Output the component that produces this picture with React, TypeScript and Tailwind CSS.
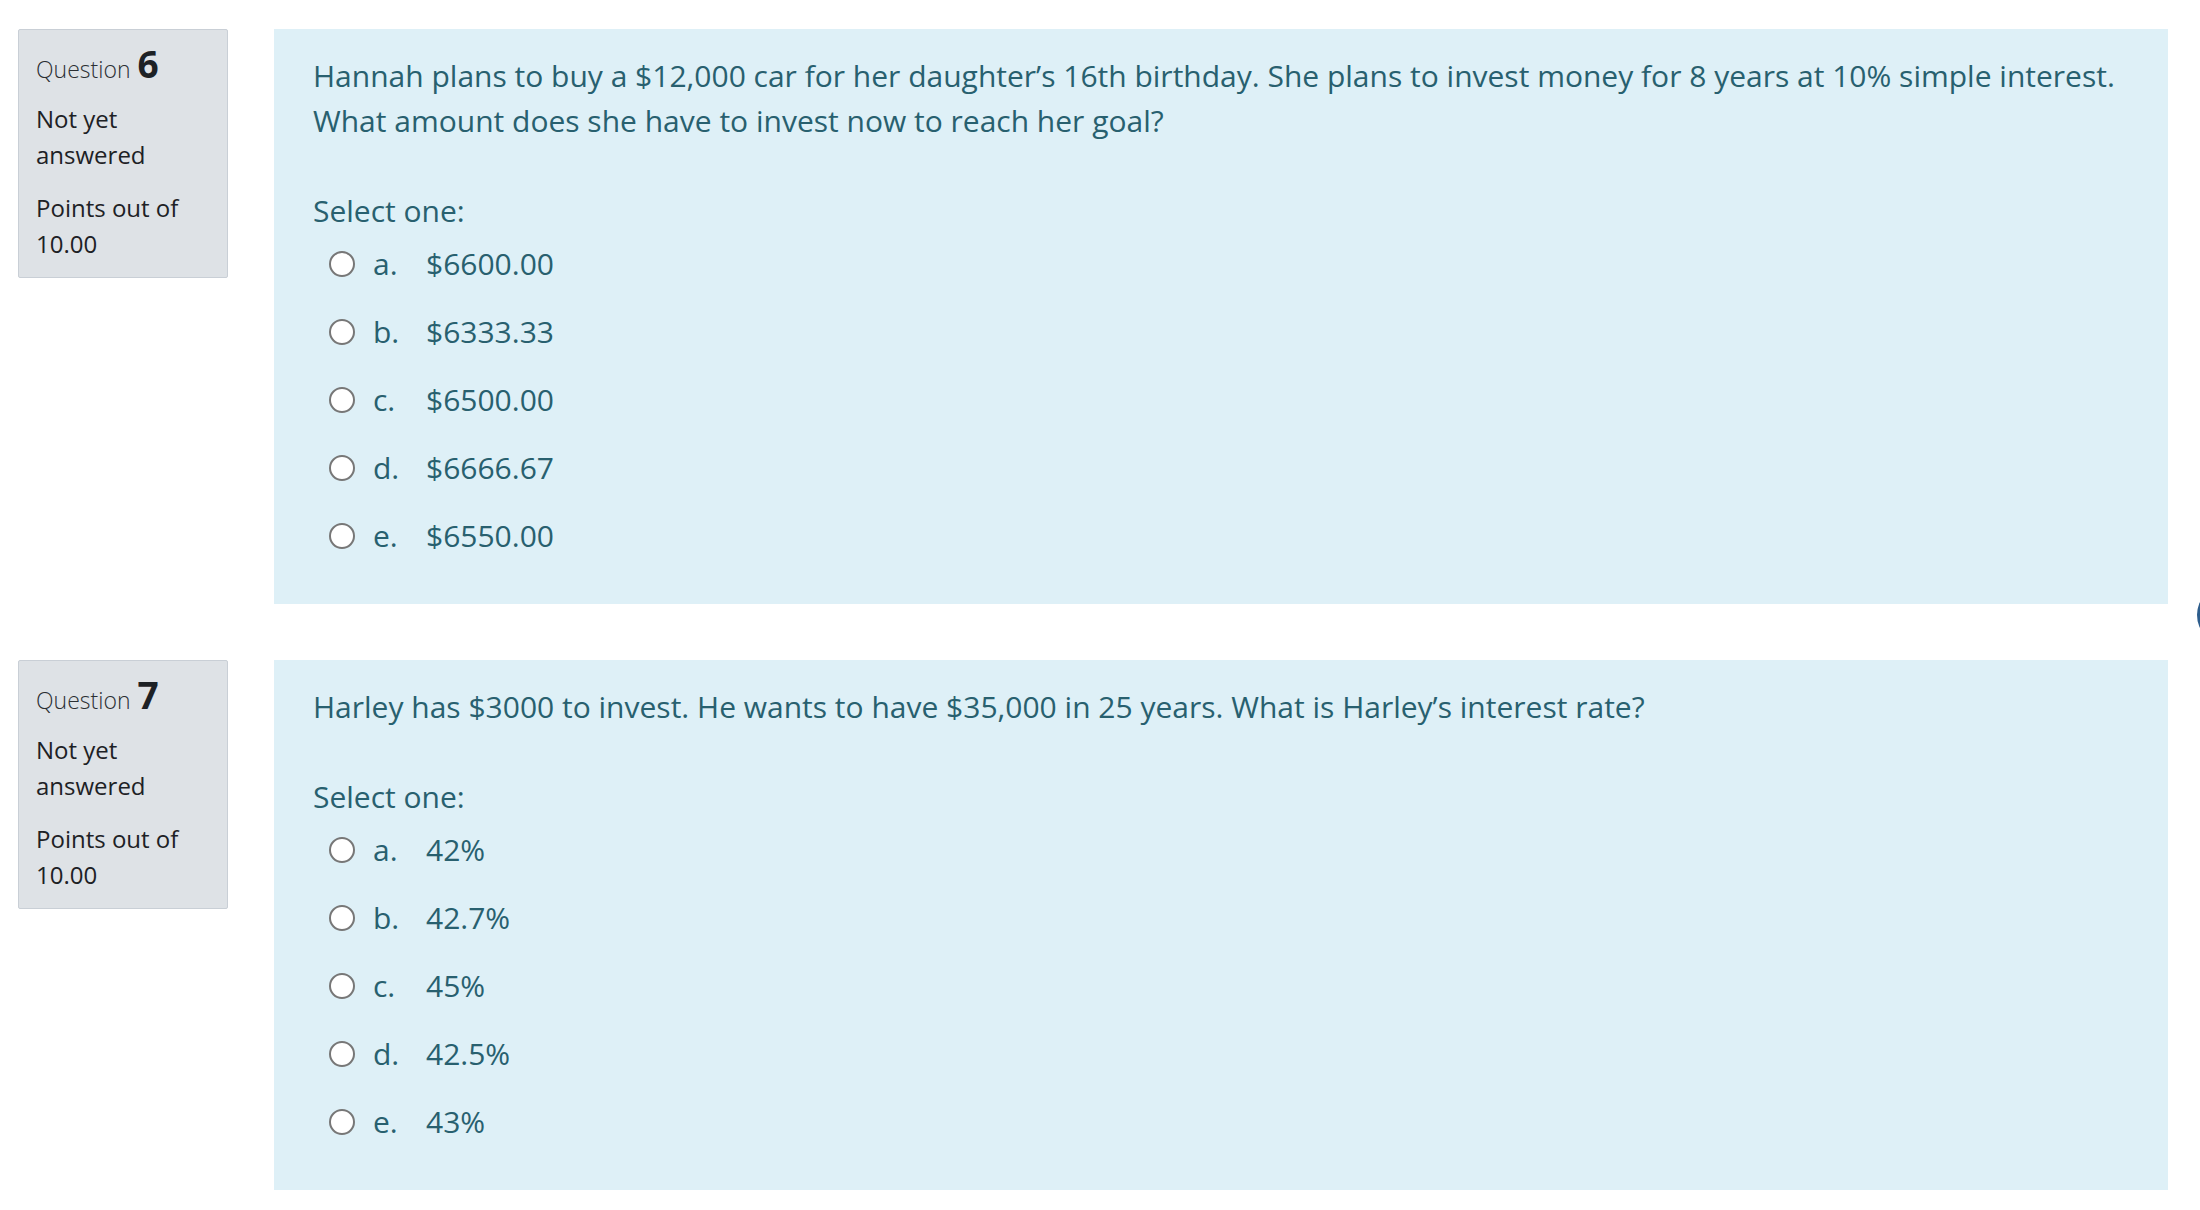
import React from "react";

type Question = {
  number: number;
  lines: string[];
  options: { letter: string; value: string }[];
};

const questions: Question[] = [
  {
    number: 6,
    lines: [
      "Hannah plans to buy a $12,000 car for her daughter\u2019s 16th birthday. She plans to invest money for 8 years at 10% simple interest.",
      "What amount does she have to invest now to reach her goal?",
    ],
    options: [
      { letter: "a.", value: "$6600.00" },
      { letter: "b.", value: "$6333.33" },
      { letter: "c.", value: "$6500.00" },
      { letter: "d.", value: "$6666.67" },
      { letter: "e.", value: "$6550.00" },
    ],
  },
  {
    number: 7,
    lines: [
      "Harley has $3000 to invest. He wants to have $35,000 in 25 years. What is Harley\u2019s interest rate?",
    ],
    options: [
      { letter: "a.", value: "42%" },
      { letter: "b.", value: "42.7%" },
      { letter: "c.", value: "45%" },
      { letter: "d.", value: "42.5%" },
      { letter: "e.", value: "43%" },
    ],
  },
];

const InfoBox = ({ number }: { number: number }) => (
  <div className="w-[210px] shrink-0 self-start bg-[#dee2e6] border border-[#c9cfd6] rounded-[2px] pl-[17px] pr-[10px] pt-[15px] pb-[15px] text-[#1d2125]">
    {/* question number */}
    <div className="flex items-baseline mb-[19px]">
      <span className="text-[23px] leading-none font-light text-[#2b2f33]">Question</span>
      <span className="text-[37px] leading-none font-bold ml-[7px]">{number}</span>
    </div>
    <div className="text-[24px] leading-[36px]">Not yet answered</div>
    <div className="text-[24px] leading-[36px] mt-[17px]">Points out of 10.00</div>
  </div>
);

const Option = ({ letter, value }: { letter: string; value: string }) => (
  <div className="flex items-center h-[45px] pl-[16px]">
    <span className="w-[26px] h-[26px] rounded-full border-2 border-[#777] bg-white shrink-0" />
    <span className="ml-[18px] w-[53px]">{letter}</span>
    <span>{value}</span>
  </div>
);

const QuestionBlock = ({ q }: { q: Question }) => (
  <div className="flex mb-[56px]">
    <InfoBox number={q.number} />

    {/* formulation */}
    <div className="flex-1 ml-[46px] bg-[#def0f7] pl-[39px] pr-[30px] pt-[24px] pb-[46px] text-[30px] leading-[45px] text-[#28606f]">
      <div className="whitespace-nowrap">
        {q.lines.map((line) => (
          <div key={line}>{line}</div>
        ))}
      </div>
      <div className="mt-[45px]">Select one:</div>
      <div className="mt-[8px] flex flex-col gap-[23px]">
        {q.options.map((o) => (
          <Option key={o.letter} letter={o.letter} value={o.value} />
        ))}
      </div>
    </div>
  </div>
);

export default function App() {
  return (
    <div
      className="relative w-[2200px] h-[1210px] overflow-hidden bg-white pl-[18px] pr-[32px] pt-[29px]"
      style={{ fontFamily: '"Open Sans", "Noto Sans", sans-serif' }}
    >
      {questions.map((q) => (
        <QuestionBlock key={q.number} q={q} />
      ))}

      {/* floating button, mostly off-screen */}
      <div className="absolute left-[2197px] top-[585px] w-[60px] h-[60px] rounded-full bg-[#2d5d8c]" />
    </div>
  );
}
